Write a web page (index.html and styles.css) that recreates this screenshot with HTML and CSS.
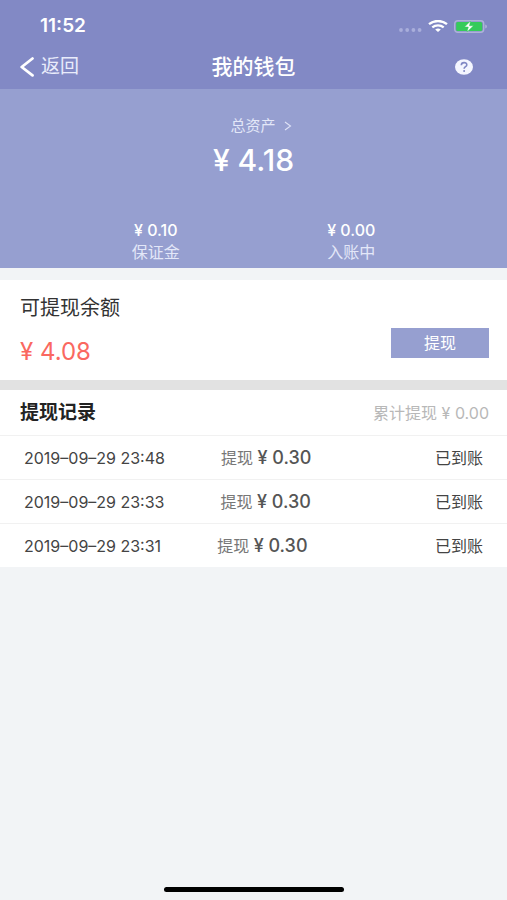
FILE: index.html
```html
<!DOCTYPE html>
<html lang="zh-CN">
<head>
    <meta charset="utf-8" />
    <meta name="viewport" content="width=device-width, initial-scale=1" />
    <title>我的钱包</title>
    <link rel="stylesheet" href="styles.css">
</head>
<body>
    <header class="header">
        <!-- 状态栏 -->
        <div class="status-bar">
            <span class="time">11:52</span>
            <div class="status-icons">
                <svg width="23" height="4" viewBox="0 0 23 4" fill="#a9aedb">
                    <circle cx="2" cy="2" r="1.9" />
                    <circle cx="8.2" cy="2" r="1.9" />
                    <circle cx="14.4" cy="2" r="1.9" />
                    <circle cx="20.6" cy="2" r="1.9" />
                </svg>
                <svg width="20" height="12" viewBox="0 0 20 12" fill="none" stroke="#fff" stroke-width="2.3">
                    <path d="M1 4.2C6 -.1 14 -.1 19 4.2" />
                    <path d="M4.3 7.3C7.5 4.6 12.5 4.6 15.7 7.3" />
                    <path d="M7.2 9.5Q10 7.5 12.8 9.5L10 12Z" fill="#fff" stroke="none" />
                </svg>
                <svg width="33" height="13" viewBox="0 0 33 13">
                    <rect x=".7" y=".7" width="29" height="11.6" rx="3" fill="none" stroke="#aeb3d8" stroke-width="1.4" />
                    <rect x="2.2" y="2" width="26" height="9" rx="1.5" fill="#35cb5a" />
                    <path d="M31.2 4.5Q33 5 33 6.5T31.2 8.5Z" fill="#aeb3d8" />
                    <path d="M16.5 1L10.5 7H14.3L13 12L19.5 5.8H15.5Z" fill="#fff" stroke="#35cb5a" stroke-width=".5" />
                </svg>
            </div>
        </div>
        <!-- 导航栏 -->
        <nav class="nav-bar">
            <a class="back" href="#">
                <svg width="14" height="20" viewBox="0 0 14 20" fill="none" stroke="#fff" stroke-width="2.8" stroke-linecap="round" stroke-linejoin="round">
                    <path d="M12.5 1.5L1.7 10L12.5 18.3" />
                </svg>
                返回
            </a>
            <h1 class="title">我的钱包</h1>
            <button class="help" type="button" aria-label="帮助">
                <svg width="18" height="16" viewBox="0 0 18 16">
                    <ellipse cx="9" cy="8" rx="9" ry="7.7" fill="#f4f6ff" />
                    <path d="M6.3 6.2C6.3 2.7 12 2.8 11.8 6C11.7 7.7 9.1 7.7 9.1 9.8" fill="none" stroke="#8088c4" stroke-width="1.6" />
                    <circle cx="9.1" cy="12.1" r="1" fill="#8088c4" />
                </svg>
            </button>
        </nav>
    </header>

    <main>
        <section class="assets">
            <a class="assets-link" href="#">
                总资产
                <svg width="8" height="10" viewBox="0 0 8 10" fill="none" stroke="#dfe3f6" stroke-width="1.1">
                    <path d="M1 1L6.5 5L1 9" />
                </svg>
            </a>
            <p class="total">¥ 4.18</p>
            <div class="stats">
                <div class="stat">
                    <p class="stat-num">¥ 0.10</p>
                    <p class="stat-name">保证金</p>
                </div>
                <div class="stat">
                    <p class="stat-num">¥ 0.00</p>
                    <p class="stat-name">入账中</p>
                </div>
            </div>
        </section>

        <section class="balance">
            <div>
                <h2 class="balance-name">可提现余额</h2>
                <p class="balance-num">¥ 4.08</p>
            </div>
            <button class="withdraw" type="button">提现</button>
        </section>

        <section class="records">
            <div class="records-head">
                <h2 class="records-title">提现记录</h2>
                <span class="records-sum">累计提现 ¥ 0.00</span>
            </div>
            <ul class="record-list">
                <li class="record">
                    <time>2019–09–29 23:48</time>
                    <span class="record-money">提现 <b>¥ 0.30</b></span>
                    <span class="record-state">已到账</span>
                </li>
                <li class="record">
                    <time>2019–09–29 23:33</time>
                    <span class="record-money">提现 <b>¥ 0.30</b></span>
                    <span class="record-state">已到账</span>
                </li>
                <li class="record">
                    <time>2019–09–29 23:31</time>
                    <span class="record-money">提现 <b>¥ 0.30</b></span>
                    <span class="record-state">已到账</span>
                </li>
            </ul>
        </section>
    </main>

    <div class="home-bar"></div>
</body>
</html>
```

FILE: styles.css
```css
* {
    box-sizing: border-box;
    margin: 0;
    padding: 0;
}

body {
    display: flex;
    flex-direction: column;
    min-height: 100vh;
    background: #f2f4f6;
    color: #444;
    font-family: Inter, "Noto Sans CJK SC", sans-serif;
    font-size: 16px;
    line-height: 24px;
}

a {
    color: inherit;
    text-decoration: none;
}

button {
    border: 0;
    font: inherit;
    cursor: pointer;
}

svg {
    display: block;
}

/*顶部*/
.header {
    padding: 8px 20px 0;
    background: #8289c5;
    color: #fff;
}

.status-bar {
    display: flex;
    align-items: center;
    justify-content: space-between;
    height: 36px;
    padding-left: 20px;
}

.time {
    font-size: 19px;
    font-weight: 600;
}

.status-icons {
    display: flex;
    align-items: center;
    gap: 6px;
}

    .status-icons svg:first-child {
        margin-top: 8px;
    }

.nav-bar {
    display: grid;
    grid-template-columns: 1fr auto 1fr;
    align-items: center;
    height: 45px;
}

.back {
    display: flex;
    align-items: center;
    gap: 7px;
    color: #e9ecfb;
    font-size: 19px;
}

.title {
    font-size: 21px;
    font-weight: 500;
}

.help {
    justify-self: end;
    margin-right: 14px;
    background: none;
}

/*总资产*/
.assets {
    padding: 25px 58px 5px;
    background: #969fd0;
    color: #fff;
    text-align: center;
}

.assets-link {
    display: flex;
    align-items: center;
    justify-content: center;
    gap: 8px;
    padding-left: 15px;
    color: #e3e7f8;
    font-size: 15px;
}

.total {
    margin-bottom: 37px;
    font-size: 30px;
    font-weight: 500;
    line-height: 44px;
}

.stats {
    display: flex;
}

.stat {
    flex: 1;
    line-height: 22px;
}

.stat-num {
    font-size: 16px;
    font-weight: 500;
}

.stat-name {
    color: #e3e7f8;
}

/*可提现余额*/
.balance {
    display: flex;
    align-items: flex-end;
    justify-content: space-between;
    margin-top: 12px;
    padding: 13px 18px 13px 20px;
    background: #fff;
}

.balance-name {
    margin-bottom: 14px;
    color: #333;
    font-size: 20px;
    font-weight: 400;
    line-height: 30px;
}

.balance-num {
    color: #fa6860;
    font-size: 24px;
    line-height: 30px;
}

.withdraw {
    width: 98px;
    height: 30px;
    margin-bottom: 9px;
    background: #969fd0;
    color: #fff;
}

/*提现记录*/
.records {
    border-top: 10px solid #e2e2e2;
    background: #fff;
}

.records-head {
    display: flex;
    align-items: center;
    justify-content: space-between;
    height: 45px;
    padding: 0 18px 0 20px;
}

.records-title {
    color: #222;
    font-size: 19px;
    font-weight: 700;
}

.records-sum {
    color: #b8b8b8;
    font-size: 16px;
}

.record-list {
    list-style: none;
}

.record {
    display: flex;
    align-items: center;
    height: 44px;
    padding: 0 24px;
    border-top: 1px solid #f1f1f1;
}

.record-money {
    margin-left: 56px;
    color: #777;
}

    .record-money b {
        color: #555;
        font-size: 18px;
        font-weight: 500;
    }

.record-state {
    margin-left: auto;
}

/*底部横条*/
.home-bar {
    width: 180px;
    height: 5px;
    margin: auto auto 8px;
    border-radius: 3px;
    background: #000;
}
```
